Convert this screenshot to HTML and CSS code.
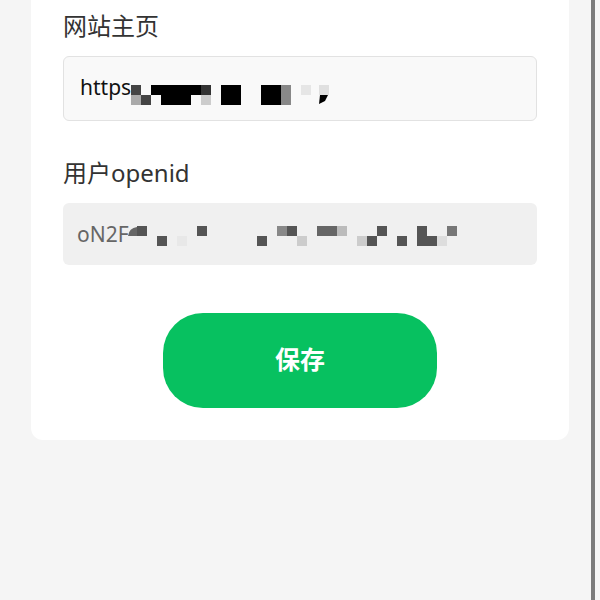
FILE: index.html
```html
<!DOCTYPE html>
<html lang="zh-CN">
<head>
<meta charset="utf-8">
<title>设置</title>
<link rel="stylesheet" href="styles.css">
</head>
<body>
<div class="page">
  <main class="main">
    <section class="card">
      <div class="label">网站主页</div>
      <div class="field field-edit">
        <span class="value">https</span>
        <svg class="mosaic" width="200" height="20" viewBox="0 0 200 20">
          <rect x="0" y="0" width="10" height="10" fill="#444"/>
          <rect x="20" y="0" width="50" height="10" fill="#000"/>
          <rect x="70" y="0" width="10" height="10" fill="#333"/>
          <rect x="90" y="0" width="20" height="20" fill="#000"/>
          <rect x="130" y="0" width="20" height="20" fill="#000"/>
          <rect x="150" y="0" width="10" height="20" fill="#888"/>
          <rect x="170" y="0" width="10" height="10" fill="#e6e6e6"/>
          <rect x="188" y="0" width="10" height="10" fill="#e0e0e0"/>
          <rect x="0" y="10" width="10" height="10" fill="#aaa"/>
          <rect x="10" y="10" width="10" height="10" fill="#444"/>
          <rect x="30" y="10" width="30" height="10" fill="#000"/>
          <rect x="70" y="10" width="10" height="10" fill="#ccc"/>
          <polygon points="189,10 197,10 194,16 188,19" fill="#000"/>
        </svg>
      </div>

      <div class="label label-second">用户openid</div>
      <div class="field field-readonly">
        <span class="value">oN2F</span>
        <svg class="mosaic mosaic-id" width="330" height="20" viewBox="0 0 330 20">
          <path d="M1 10 Q2 2 10 1 L10 10 Z" fill="#666"/>
          <rect x="10" y="0" width="10" height="10" fill="#555"/>
          <rect x="70" y="0" width="10" height="10" fill="#555"/>
          <rect x="150" y="0" width="10" height="10" fill="#888"/>
          <rect x="160" y="0" width="10" height="10" fill="#555"/>
          <rect x="190" y="0" width="20" height="10" fill="#666"/>
          <rect x="210" y="0" width="10" height="10" fill="#bbb"/>
          <rect x="250" y="0" width="10" height="10" fill="#555"/>
          <rect x="290" y="0" width="10" height="20" fill="#555"/>
          <rect x="320" y="0" width="10" height="10" fill="#777"/>
          <rect x="30" y="10" width="10" height="10" fill="#555"/>
          <rect x="50" y="10" width="10" height="10" fill="#e8e8e8"/>
          <rect x="130" y="10" width="10" height="10" fill="#555"/>
          <rect x="170" y="10" width="10" height="10" fill="#ccc"/>
          <rect x="230" y="10" width="10" height="10" fill="#ccc"/>
          <rect x="240" y="10" width="10" height="10" fill="#555"/>
          <rect x="270" y="10" width="10" height="10" fill="#555"/>
          <rect x="300" y="10" width="10" height="10" fill="#555"/>
          <rect x="310" y="10" width="10" height="10" fill="#ddd"/>
        </svg>
      </div>

      <button class="save" type="button">保存</button>
    </section>
  </main>
  <div class="scrollbar"></div>
  <div class="gutter"></div>
</div>
</body>
</html>
```

FILE: styles.css
```css
html, body {
  margin: 0;
  padding: 0;
  background: #f5f5f5;
  font-family: "Noto Sans", "Noto Sans CJK SC", sans-serif;
}

.page {
  display: flex;
  height: 600px;
  overflow: hidden;
}

.main {
  flex: 0 0 591px;
  box-sizing: border-box;
  padding: 0 22px 0 31px;
}

.scrollbar {
  flex: 0 0 4px;
  background: #7b7b7b;
}

.gutter {
  flex: 1;
  background: #f5f5f5;
}

.card {
  background: #ffffff;
  border-radius: 0 0 12px 12px;
  padding: 9px 32px 32px;
  display: flex;
  flex-direction: column;
}

.label {
  font-size: 24px;
  line-height: 34px;
  color: #333333;
  margin-bottom: 13px;
}

.label-second {
  margin-top: 35px;
}

.field {
  display: flex;
  align-items: flex-start;
  box-sizing: border-box;
  border-radius: 6px;
}

.field-edit {
  height: 65px;
  background: #f9f9f9;
  border: 1px solid #e2e2e2;
  padding-left: 16px;
}

.field-readonly {
  height: 62px;
  background: #f0f0f0;
  padding-left: 14px;
}

.value {
  font-size: 21px;
  line-height: 29px;
  margin-top: 16px;
}

.field-edit .value {
  color: #111111;
}

.field-readonly .value {
  color: #666666;
  margin-top: 17px;
}

.mosaic {
  display: block;
  flex: 0 0 auto;
  margin-top: 28px;
}

.mosaic-id {
  margin-top: 23px;
  margin-left: -2px;
}

.save {
  align-self: center;
  margin-top: 48px;
  width: 274px;
  height: 95px;
  border: none;
  border-radius: 40px;
  background: #07c160;
  color: #ffffff;
  font-family: "Noto Sans CJK SC", sans-serif;
  font-size: 25px;
  font-weight: 700;
  letter-spacing: 0;
  padding: 0 0 5px;
}
```
